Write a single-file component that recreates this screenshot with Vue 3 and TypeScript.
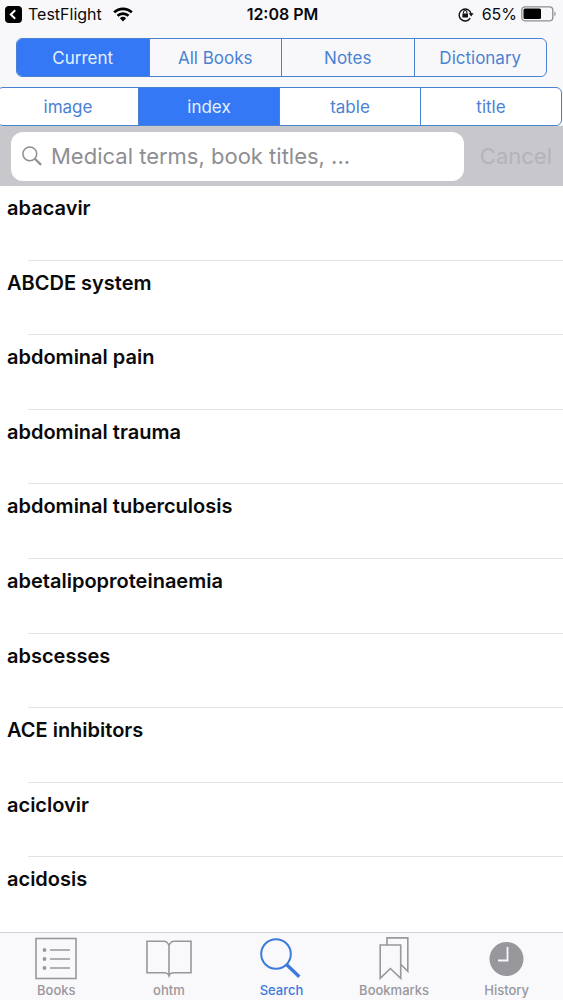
<script setup lang="ts">
import { ref } from 'vue'

const scopes = ['Current', 'All Books', 'Notes', 'Dictionary']
const kinds = ['image', 'index', 'table', 'title']
const terms = [
  'abacavir',
  'ABCDE system',
  'abdominal pain',
  'abdominal trauma',
  'abdominal tuberculosis',
  'abetalipoproteinaemia',
  'abscesses',
  'ACE inhibitors',
  'aciclovir',
  'acidosis',
]
const tabs = ['Books', 'ohtm', 'Search', 'Bookmarks', 'History']

const scope = ref('Current')
const kind = ref('index')
const tab = ref('Search')
const query = ref('')
</script>

<template>
  <div class="screen">
    <header class="top">
      <div class="status">
        <div class="status-left">
          <button class="back" type="button">
            <svg width="17" height="17" viewBox="0 0 17 17" aria-hidden="true">
              <rect width="17" height="17" rx="4" fill="#000" />
              <path d="M10.2 4.2 5.8 8.5l4.4 4.3" fill="none" stroke="#fff" stroke-width="2" />
            </svg>
            <span>TestFlight</span>
          </button>
          <svg width="20" height="15" viewBox="0 0 20 15" aria-hidden="true">
            <g fill="none" stroke="#000" stroke-width="2.7">
              <path d="M1.2 5.4a12.6 12.6 0 0 1 17.6 0" />
              <path d="M4.5 8.8a7.9 7.9 0 0 1 11 0" />
            </g>
            <path d="M6.9 11.2a4.5 4.5 0 0 1 6.2 0L10 14.4z" fill="#000" />
          </svg>
        </div>
        <div class="time">12:08 PM</div>
        <div class="status-right">
          <svg class="lock" width="16" height="15" viewBox="0 0 16 15" aria-hidden="true">
            <path d="M12.3 11.2A6 6 0 1 1 13.1 7" fill="none" stroke="#111" stroke-width="1.4" />
            <path d="M10.7 6.3h4.9l-2.4 3.2z" fill="#111" />
            <rect x="4.4" y="6.4" width="5.6" height="4.2" rx=".5" fill="#111" />
            <path d="M5.5 6.6V5.2a1.7 1.7 0 0 1 3.4 0v1.4" fill="none" stroke="#111" stroke-width="1.1" />
          </svg>
          <span>65%</span>
          <svg width="35" height="16" viewBox="0 0 35 16" aria-hidden="true">
            <rect x=".8" y=".8" width="31" height="14" rx="3.2" fill="none" stroke="#8e8e92" stroke-width="1.3" />
            <rect x="2.5" y="2.6" width="17.5" height="10.4" rx="1.5" fill="#000" />
            <path d="M33.4 5.4c1.7.7 1.7 4.2 0 4.9z" fill="#8e8e92" />
          </svg>
        </div>
      </div>

      <div class="segments scopes" role="group" aria-label="Search scope">
        <button
          v-for="s in scopes"
          :key="s"
          type="button"
          :class="{ on: scope === s }"
          :aria-pressed="scope === s"
          @click="scope = s"
        >{{ s }}</button>
      </div>
      <div class="segments kinds" role="group" aria-label="Result type">
        <button
          v-for="k in kinds"
          :key="k"
          type="button"
          :class="{ on: kind === k }"
          :aria-pressed="kind === k"
          @click="kind = k"
        >{{ k }}</button>
      </div>
    </header>

    <form class="search" role="search" @submit.prevent>
      <label class="field">
        <svg width="20" height="20" viewBox="0 0 20 20" fill="none" stroke="#8e8e93" aria-hidden="true">
          <circle cx="7.8" cy="7.8" r="6.9" stroke-width="1.5" />
          <path d="m12.8 12.8 6.3 6.1" stroke-width="2.2" />
        </svg>
        <input v-model="query" type="text" aria-label="Search" placeholder="Medical terms, book titles, ..." />
      </label>
      <button class="cancel" type="button" @click="query = ''">Cancel</button>
    </form>

    <ul class="terms">
      <li v-for="t in terms" :key="t">{{ t }}</li>
    </ul>

    <nav class="tabs">
      <button
        v-for="t in tabs"
        :key="t"
        type="button"
        :class="{ active: tab === t }"
        @click="tab = t"
      >
        <svg v-if="t === 'Books'" width="46" height="44" viewBox="0 0 46 44" fill="none" stroke="currentColor" aria-hidden="true">
          <rect x="3" y="1.5" width="40" height="40" stroke-width="1.6" />
          <path d="M17 13h20M17 22h20M17 31h20" stroke-width="1.6" />
          <g fill="currentColor" stroke="none">
            <circle cx="11.5" cy="13" r="1.9" />
            <circle cx="11.5" cy="22" r="1.9" />
            <circle cx="11.5" cy="31" r="1.9" />
          </g>
        </svg>
        <svg v-else-if="t === 'ohtm'" width="46" height="44" viewBox="0 0 46 44" fill="none" stroke="currentColor" stroke-width="1.6" aria-hidden="true">
          <path d="M23 8.5c-1.2-3-2.8-4.2-5.2-4.2H1v31.5h17c2.6 0 4.2.5 5 3 .8-2.5 2.4-3 5-3h17V4.3H28.2c-2.4 0-4 1.2-5.2 4.2zM23 8.5v30" />
        </svg>
        <svg v-else-if="t === 'Search'" width="46" height="44" viewBox="0 0 46 44" fill="none" stroke="currentColor" aria-hidden="true">
          <circle cx="18" cy="17" r="14.8" stroke-width="2" />
          <path d="m28.5 27.5 12.8 12.3" stroke-width="3.4" />
        </svg>
        <svg v-else-if="t === 'Bookmarks'" width="46" height="44" viewBox="0 0 46 44" fill="none" stroke="currentColor" stroke-width="1.6" aria-hidden="true">
          <path d="M9.2 8h20.5v33.3L19.4 31.5 9.2 41.3z" />
          <path d="M16 8V.9h20.8v33.4l-7.1-7" />
        </svg>
        <svg v-else width="46" height="44" viewBox="0 0 46 44" aria-hidden="true">
          <circle cx="22.5" cy="22" r="17" fill="currentColor" />
          <path d="M23.5 10v13.5H14" fill="none" stroke="#f9f8fb" stroke-width="1.8" />
        </svg>
        <span>{{ t }}</span>
      </button>
    </nav>
  </div>
</template>

<style>
body {
  margin: 0;
}
</style>

<style scoped>
.screen {
  display: flex;
  flex-direction: column;
  min-height: 100vh;
  overflow-x: hidden;
  background: #fff;
  color: #0a0a0c;
  font-family: Inter, "Liberation Sans", sans-serif;
}

button {
  margin: 0;
  padding: 0;
  border: 0;
  background: none;
  color: inherit;
  font: inherit;
  cursor: pointer;
}

.top {
  background: #f8f8fb;
}

.status {
  display: grid;
  grid-template-columns: 1fr auto 1fr;
  align-items: center;
  height: 28px;
  padding: 0 5px;
  font-size: 16px;
}

.status-left,
.status-right,
.back {
  display: flex;
  align-items: center;
}

.status-left {
  gap: 11px;
}

.back {
  gap: 6px;
}

.status-right {
  justify-content: flex-end;
  padding-right: 2px;
  gap: 4px;
}

.lock {
  margin-right: 4px;
}

.time {
  padding-left: 2px;
  font-weight: 600;
}

.segments {
  display: flex;
  box-sizing: border-box;
  height: 39px;
  overflow: hidden;
  border: 1px solid #4a82d2;
  border-radius: 6px;
  color: #4a82d2;
  font-size: 17px;
}

.segments button {
  flex: 1 1 0;
}

.segments button + button {
  border-left: 1px solid #4a82d2;
}

.segments .on {
  background: #3478f6;
  color: #e4f0ff;
}

.scopes {
  margin: 10px 16px;
}

.kinds {
  margin: 0 1px 0 -3px;
  background: #fff;
}

.search {
  display: flex;
  align-items: center;
  box-sizing: border-box;
  height: 60px;
  padding: 0 11px;
  gap: 16px;
  background: #c8c7cc;
}

.field {
  display: flex;
  flex: 1;
  align-items: center;
  min-width: 0;
  height: 49px;
  padding: 0 11px;
  gap: 9px;
  box-sizing: border-box;
  border-radius: 12px;
  background: #fff;
}

.field input {
  flex: 1;
  min-width: 0;
  padding: 0;
  border: 0;
  outline: 0;
  background: none;
  color: #111;
  font: inherit;
  font-size: 22px;
}

.field input::placeholder {
  color: #8e8e93;
  opacity: 1;
}

.cancel {
  color: #b4b3b9;
  font-size: 22px;
}

.terms {
  display: flex;
  flex: 1;
  flex-direction: column;
  margin: 0;
  padding: 0;
  list-style: none;
}

.terms li {
  position: relative;
  flex: 1 0 64px;
  box-sizing: border-box;
  padding: 9px 7px;
  font-size: 20px;
  font-weight: 600;
  line-height: 26px;
}

.terms li:not(:last-child)::after {
  content: "";
  position: absolute;
  right: 0;
  bottom: 0;
  left: 28px;
  height: 1px;
  background: #e3e3e5;
}

.tabs {
  display: flex;
  border-top: 1px solid #d2d1d5;
  background: #f9f8fb;
  color: #98979c;
}

.tabs button {
  display: flex;
  flex: 1 1 0;
  flex-direction: column;
  align-items: center;
  min-width: 0;
  padding: 4px 0 1px;
  font-size: 13px;
  font-weight: 500;
  line-height: 18px;
}

.tabs .active {
  color: #3d7ad9;
}
</style>
